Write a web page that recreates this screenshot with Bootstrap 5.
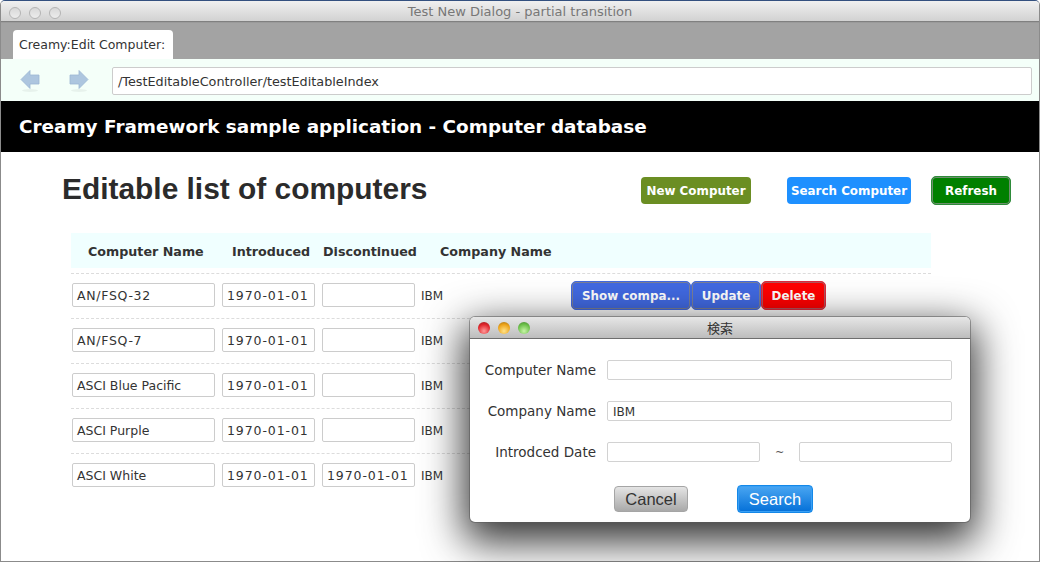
<!DOCTYPE html>
<html lang="en">
<head>
<meta charset="utf-8">
<title>Test New Dialog - partial transition</title>
<link href="https://cdn.jsdelivr.net/npm/bootstrap@5.3.0/dist/css/bootstrap.min.css" rel="stylesheet">
<style>
html,body{height:100%;overflow:hidden;background:#fff}
body{font-family:"DejaVu Sans","Liberation Sans",sans-serif;font-size:13px;color:#333;width:1040px;height:562px;position:relative}
.win{height:562px;border-left:1px solid #8b8b8b;border-right:1px solid #8b8b8b;border-bottom:1px solid #8b8b8b;border-top:1px solid #33507f;border-radius:5px 5px 0 0;overflow:hidden}
.titlebar{height:21px;background:linear-gradient(#f0f0f0,#d2d2d2);border-bottom:1px solid #808080;position:relative;font-size:13px;color:#777;line-height:22px;text-align:center}
.lights{position:absolute;left:8px;top:6px;gap:8px}
.light{width:12px;height:12px;border-radius:50%;border:1px solid #b4b4b4;background:linear-gradient(#d8d8d8,#ececec);display:block}
.tabstrip{height:37px;background:#a3a3a3;padding:7px 0 0 12px;border-top:1px solid #9a9a9a}
.tabitem{width:160px;height:29px;background:#fff;border-radius:4px 4px 0 0;font-size:12.5px;line-height:29px;padding-left:6px;color:#333;white-space:nowrap}
.toolbar{height:42px;background:#f4fff9;padding:2px 7px 0 19px}
.navbtn{width:20px;height:24px;display:block;flex:none}
.navgap{margin-left:29px}
.urlbox{width:920px;height:28px;background:#fff;border:1px solid #ccc;border-radius:2px;line-height:28px;padding-left:5px;font-size:12.8px;color:#333;margin-left:23px}
.brandbar{height:51px;background:#000;color:#fff;font-weight:700;font-size:18.4px;line-height:52px;padding-left:18px;white-space:nowrap}
.pagehead{height:81px;padding:0 28px 0 61px}
.pagetitle{font-family:"Liberation Sans",Arial,sans-serif;font-weight:700;font-size:29.9px;color:#2b2b2b;margin:0;line-height:74px;padding-bottom:8px}
.actbtn{font-size:11.9px;font-weight:700;color:#fff;height:27px;line-height:29px;border-radius:4px;text-align:center;white-space:nowrap;margin-top:-5px}
.a-new{width:110px;background:#6b8e23;margin-right:36px}
.a-search{width:124px;background:#1e90ff;margin-right:20px}
.a-refresh{width:80px;background:#008000;border:1px solid #2e8b3a;box-shadow:inset 0 0 0 1px #6f8f6f;height:29px;line-height:28px;border-radius:5px}
.tablewrap{width:860px;margin-left:70px}
.headrow{height:35px;background:#f0ffff;font-weight:700;font-size:12.7px;line-height:37px;color:#333}
.hc{white-space:nowrap}
.hc1{width:161px;padding-left:17px}
.hc2{width:91px}
.hc3{width:117px}
.datarow{height:45px;border-top:1px dashed #dcdcdc;padding-left:1px;padding-bottom:2px;position:relative}
.firstrow{margin-top:5px}
.tf{height:24px;background:#fff;border:1px solid #ccc;border-radius:2px;font-size:12.5px;line-height:24px;padding-left:4px;color:#333;white-space:nowrap;overflow:hidden;margin-right:7px}
.tf1{width:143px}
.tf2{width:93px}
.spdate{letter-spacing:.9px}
.spcode{letter-spacing:.7px}
.co{font-size:12px;margin-left:-1px;width:150px;line-height:20px;padding-top:1px}
.rb{height:29px;line-height:29px;color:#fff;font-weight:700;font-size:11.9px;border-radius:5px;text-align:center;white-space:nowrap}
.rb1{width:120px;background:#4169e1;border:1px solid #4169e1;box-shadow:inset 0 0 0 1px #7a7f96}
.rb2{width:70px;background:#4169e1;border:1px solid #4169e1;box-shadow:inset 0 0 0 1px #7a7f96}
.rb3{width:65px;background:#f00;border:1px solid #dc2a3c;box-shadow:inset 0 0 0 1px #b5535c}
.dlg{position:absolute;left:470px;top:317px;width:500px;height:205px;background:#fff;border-radius:5px;box-shadow:0 0 0 1px rgba(90,90,90,.55),0 14px 40px 6px rgba(0,0,0,.8);overflow:hidden}
.dlgbar{height:22px;background:linear-gradient(#e6e6e6,#bdbdbd);border-bottom:1px solid #6e6e6e;position:relative;text-align:center;font-family:"Noto Sans CJK JP","DejaVu Sans",sans-serif;font-size:13px;line-height:22px;color:#333}
.dlights{position:absolute;left:8px;top:5px;gap:8px}
.dl{width:12px;height:12px;border-radius:50%;display:block}
.dr{background:radial-gradient(circle at 50% 75%,#ff9a9a,#e0262c 60%,#8f1a1d)}
.dy{background:radial-gradient(circle at 50% 75%,#ffe38a,#eda31a 60%,#9a6a12)}
.dg{background:radial-gradient(circle at 50% 75%,#c8f5a8,#6cc04a 60%,#40802c)}
.dlgbody{padding:21px 18px 0 0}
.frow{height:41px}
.flabel{width:126px;text-align:right;font-size:13.5px;color:#333;white-space:nowrap;line-height:21px;flex:none}
.ff{height:20px;border:1px solid #d2d2d2;border-radius:2px;background:#fff;font-size:12px;line-height:20px;padding-left:5px;color:#333}
.ffw{width:345px;margin-left:11px}
.ffd{width:153px;margin-left:11px}
.ffd2{width:153px}
.tilde{width:39px;text-align:center;font-size:11px;color:#555;padding-top:3px}
.dbtns{margin-top:2px;padding-left:144px}
.macbtn{font-family:"Liberation Sans",Arial,sans-serif;font-size:16.5px;text-align:center;border-radius:4px}
.mcancel{width:74px;height:26px;line-height:25px;background:linear-gradient(#e4e4e4,#a9a9a9);border:1px solid #a5a5a5;color:#333;margin-top:1px}
.msearch{width:76px;height:28px;line-height:27px;background:linear-gradient(#4aa6f2,#0470d8);border:1px solid #1488e8;box-shadow:0 0 0 1px #3aa0f5 inset;color:#fff;margin-left:49px}
</style>
</head>
<body>
<div class="win">
  <div class="titlebar">
    <div class="lights d-flex"><span class="light"></span><span class="light"></span><span class="light"></span></div>
    Test New Dialog - partial transition
  </div>
  <div class="tabstrip"><div class="tabitem">Creamy:Edit Computer:</div></div>
  <div class="toolbar d-flex align-items-center">
    <svg class="navbtn" viewBox="0 0 20 24"><ellipse cx="10" cy="21.500" rx="8" ry="1.500" fill="#000" opacity=".05"/><path d="M1 10.500 10 1.500V6H19V15H10V19.500Z" fill="#adc6df" stroke="#9cb6d3" stroke-width=".8"/></svg>
    <svg class="navbtn navgap" viewBox="0 0 20 24"><ellipse cx="10" cy="21.500" rx="8" ry="1.500" fill="#000" opacity=".05"/><path d="M19 10.500 10 1.500V6H1V15H10V19.500Z" fill="#adc6df" stroke="#9cb6d3" stroke-width=".8"/></svg>
    <div class="urlbox">/TestEditableController/testEditableIndex</div>
  </div>
  <div class="brandbar">Creamy Framework sample application - Computer database</div>
  <div class="pagehead d-flex align-items-center justify-content-between">
    <h1 class="pagetitle">Editable list of computers</h1>
    <div class="d-flex align-items-center">
      <div class="actbtn a-new">New Computer</div>
      <div class="actbtn a-search">Search Computer</div>
      <div class="actbtn a-refresh">Refresh</div>
    </div>
  </div>
  <div class="tablewrap">
    <div class="headrow d-flex">
      <div class="hc hc1">Computer Name</div><div class="hc hc2">Introduced</div><div class="hc hc3">Discontinued</div><div class="hc">Company Name</div>
    </div>
    <div class="datarow firstrow d-flex align-items-center">
      <div class="tf tf1 spcode">AN/FSQ-32</div><div class="tf tf2 spdate">1970-01-01</div><div class="tf tf2"></div><div class="co">IBM</div>
      <div class="d-flex"><div class="rb rb1">Show compa...</div><div class="rb rb2">Update</div><div class="rb rb3">Delete</div></div>
    </div>
    <div class="datarow d-flex align-items-center">
      <div class="tf tf1 spcode">AN/FSQ-7</div><div class="tf tf2 spdate">1970-01-01</div><div class="tf tf2"></div><div class="co">IBM</div>
    </div>
    <div class="datarow d-flex align-items-center">
      <div class="tf tf1">ASCI Blue Pacific</div><div class="tf tf2 spdate">1970-01-01</div><div class="tf tf2"></div><div class="co">IBM</div>
    </div>
    <div class="datarow d-flex align-items-center">
      <div class="tf tf1">ASCI Purple</div><div class="tf tf2 spdate">1970-01-01</div><div class="tf tf2"></div><div class="co">IBM</div>
    </div>
    <div class="datarow d-flex align-items-center">
      <div class="tf tf1">ASCI White</div><div class="tf tf2 spdate">1970-01-01</div><div class="tf tf2 spdate">1970-01-01</div><div class="co">IBM</div>
    </div>
  </div>
</div>
<div class="dlg">
  <div class="dlgbar">
    <div class="dlights d-flex"><span class="dl dr"></span><span class="dl dy"></span><span class="dl dg"></span></div>
    検索
  </div>
  <div class="dlgbody">
    <div class="frow d-flex align-items-start"><div class="flabel">Computer Name</div><div class="ff ffw"></div></div>
    <div class="frow d-flex align-items-start"><div class="flabel">Company Name</div><div class="ff ffw">IBM</div></div>
    <div class="frow d-flex align-items-start"><div class="flabel">Introdced Date</div><div class="ff ffd"></div><div class="tilde">~</div><div class="ff ffd2"></div></div>
    <div class="dbtns d-flex align-items-start"><div class="macbtn mcancel">Cancel</div><div class="macbtn msearch">Search</div></div>
  </div>
</div>
<script src="https://cdn.jsdelivr.net/npm/bootstrap@5.3.0/dist/js/bootstrap.bundle.min.js"></script>
</body>
</html>
